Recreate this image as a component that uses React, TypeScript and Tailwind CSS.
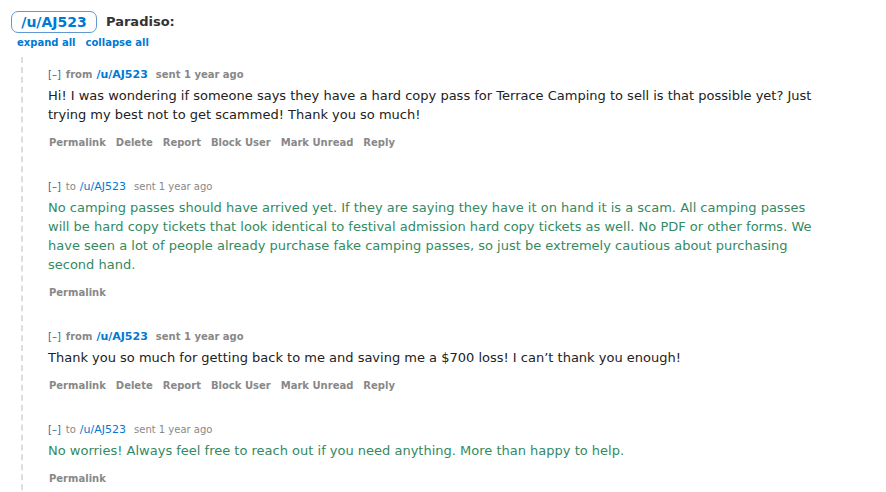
import React from 'react';

type Msg = {
  dir: 'from' | 'to';
  body: string[];
  actions: string[];
};

const messages: Msg[] = [
  {
    dir: 'from',
    body: [
      'Hi! I was wondering if someone says they have a hard copy pass for Terrace Camping to sell is that possible yet? Just trying my best not to get scammed! Thank you so much!',
    ],
    actions: ['Permalink', 'Delete', 'Report', 'Block User', 'Mark Unread', 'Reply'],
  },
  {
    dir: 'to',
    body: [
      'No camping passes should have arrived yet. If they are saying they have it on hand it is a scam. All camping passes will be hard copy tickets that look identical to festival admission hard copy tickets as well. No PDF or other forms. We have seen a lot of people already purchase fake camping passes, so just be extremely cautious about purchasing second hand.',
    ],
    actions: ['Permalink'],
  },
  {
    dir: 'from',
    body: ['Thank you so much for getting back to me and saving me a $700 loss! I can\u2019t thank you enough!'],
    actions: ['Permalink', 'Delete', 'Report', 'Block User', 'Mark Unread', 'Reply'],
  },
  {
    dir: 'to',
    body: ['No worries! Always feel free to reach out if you need anything. More than happy to help.'],
    actions: ['Permalink'],
  },
];

function Message({ msg }: { msg: Msg }) {
  const isFrom = msg.dir === 'from';
  return (
    <div className="pt-[6px] pb-[24px]">
      {/* header */}
      <div className={`flex items-center h-[14px] text-[10px] leading-[14px] ${isFrom ? 'font-bold' : ''}`}>
        <span className="text-[#369] font-normal">[–]</span>
        <span className="ml-[5px] text-[#888]">{isFrom ? 'from' : 'to'}</span>
        <span className="ml-[4px] text-[11px] text-[#0079d3]">/u/AJ523</span>
        <span className="ml-[8px] text-[#888]">sent 1 year ago</span>
      </div>

      {/* body */}
      <div
        className={`mt-[4px] pr-[60px] text-[13px] leading-[19px] ${
          isFrom ? 'text-[#222]' : 'text-[#338a62]'
        }`}
      >
        {msg.body.map((p, i) => (
          <p key={i}>{p}</p>
        ))}
      </div>

      {/* actions */}
      <ul className="mt-[12px] flex items-center gap-[10px] h-[14px] text-[10px] leading-[14px] font-bold text-[#888] pl-[1px]">
        {msg.actions.map((a) => (
          <li key={a}>{a}</li>
        ))}
      </ul>
    </div>
  );
}

export default function App() {
  return (
    <div
      className="h-[492px] overflow-hidden flex flex-col bg-white pt-[11px] pl-[11px]"
      style={{ fontFamily: '"DejaVu Sans", Verdana, sans-serif' }}
    >
      {/* title row */}
      <div className="flex items-center">
        <span className="inline-flex items-center justify-center h-[22px] w-[86px] rounded-[7px] border border-[#5f99cf] text-[14px] font-bold text-[#0079d3]">
          /u/AJ523
        </span>
        <span className="ml-[9px] text-[13px] font-bold text-[#333]">Paradiso:</span>
      </div>

      <div className="mt-[3px] ml-[6px] flex gap-[10px] text-[10px] leading-[14px] font-bold text-[#0079d3]">
        <span>expand all</span>
        <span>collapse all</span>
      </div>

      {/* thread */}
      <div className="flex-1 mt-[7px] ml-[10px] border-l-2 border-dashed border-[#ddd] pl-[25px] pt-[5px]">
        {messages.map((m, i) => (
          <Message key={i} msg={m} />
        ))}
      </div>
    </div>
  );
}
